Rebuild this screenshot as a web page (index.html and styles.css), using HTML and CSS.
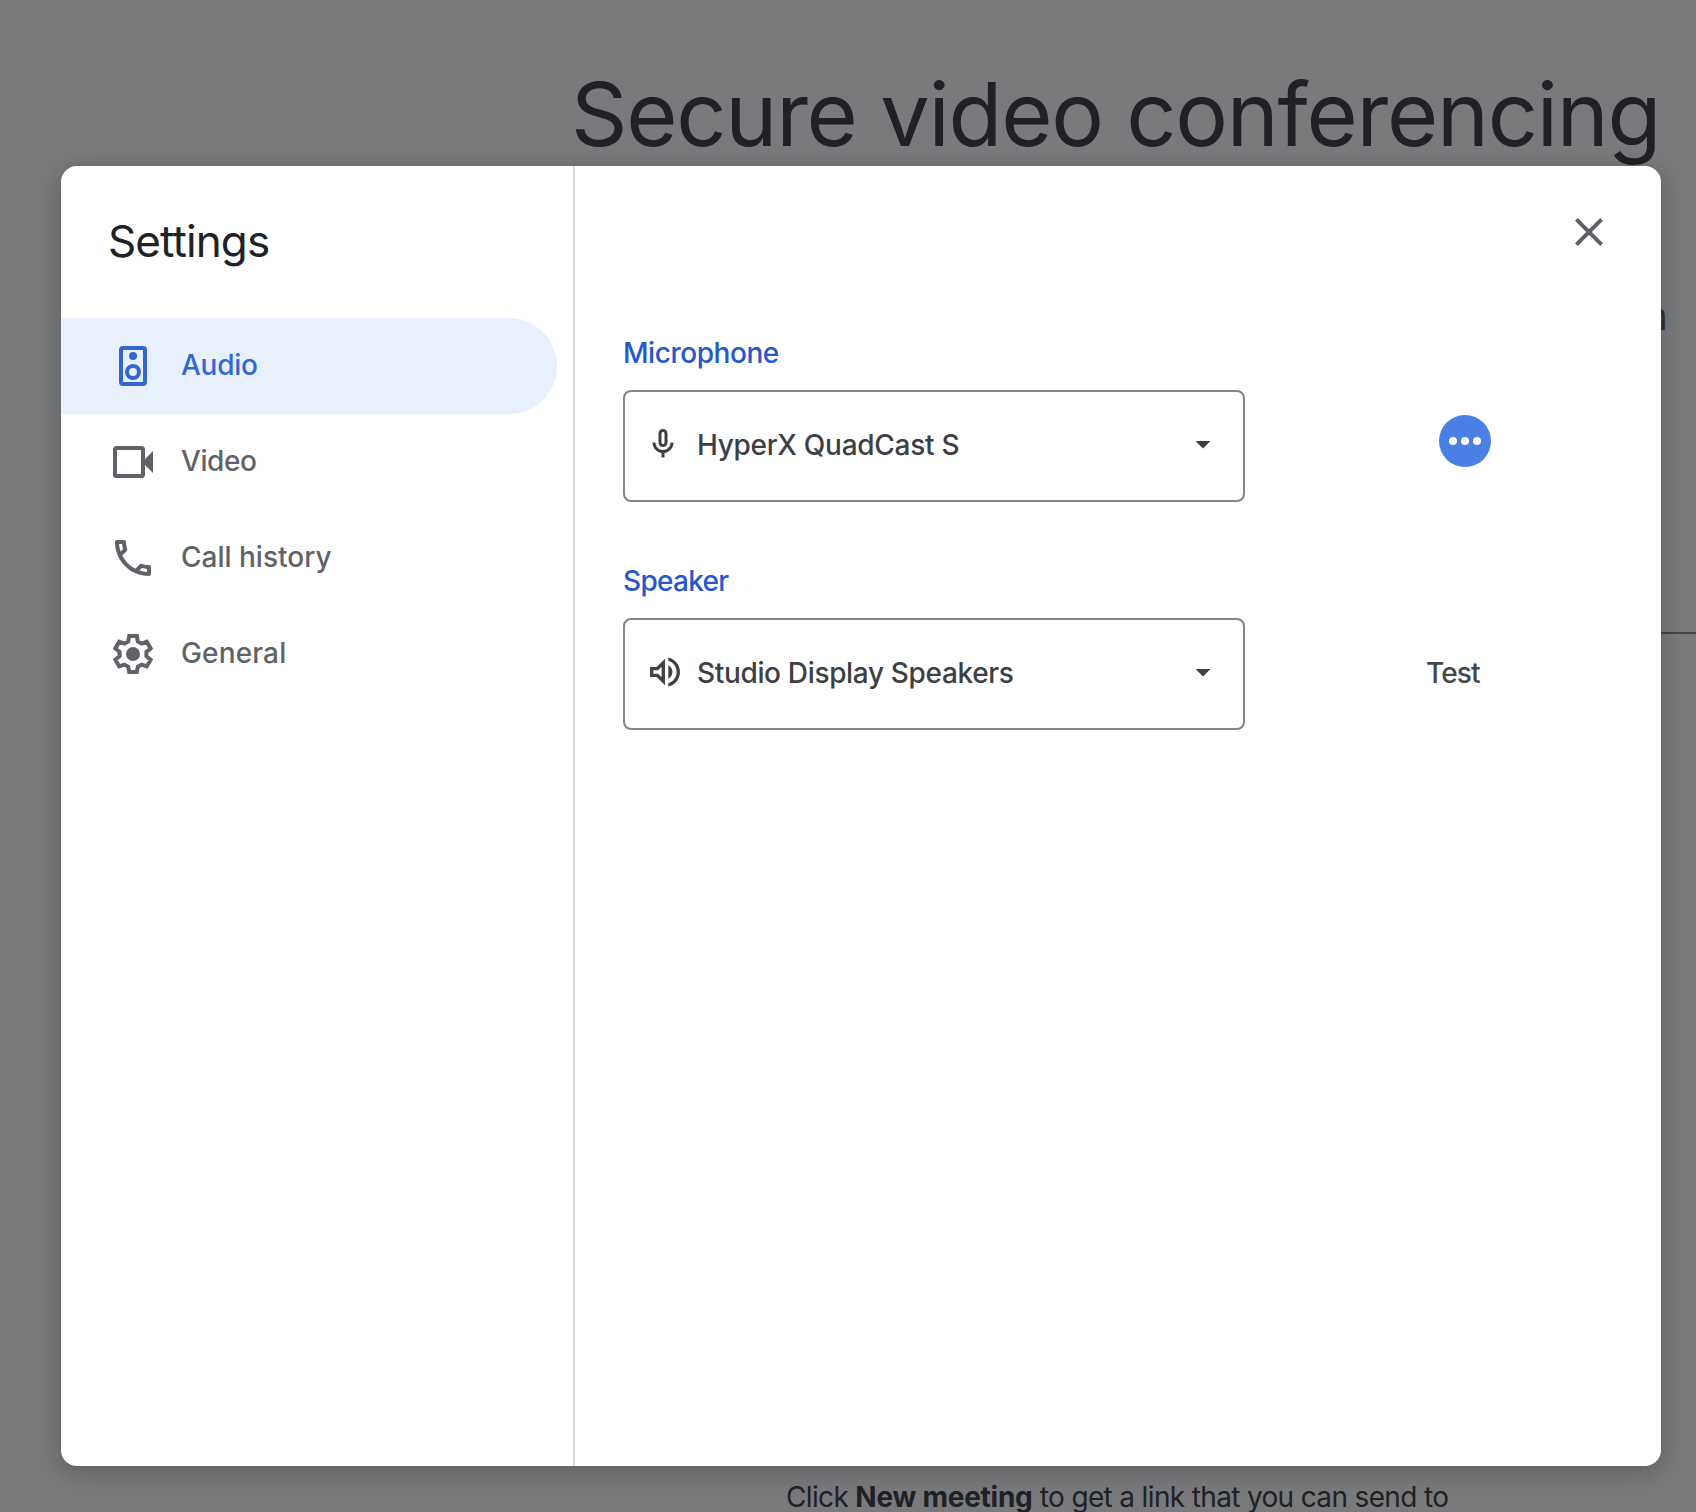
FILE: index.html
```html
<!DOCTYPE html>
<html lang="en">
<head>
<meta charset="utf-8">
<title>Settings</title>
<link rel="stylesheet" href="styles.css">
</head>
<body>
<main class="page">
  <h1 class="headline">Secure video conferencing</h1>
  <p class="lead">n</p>
  <hr class="rule">
  <p class="hint">Click <b>New meeting</b> to get a link that you can send to</p>
</main>

<div class="dialog" role="dialog" aria-labelledby="title">
  <aside class="sidebar">
    <h2 class="title" id="title">Settings</h2>
    <nav class="nav">
      <a class="item active"><svg class="icon" viewBox="0 0 24 24"><path fill-rule="evenodd" d="M7 2h10a2 2 0 0 1 2 2v16a2 2 0 0 1-2 2H7a2 2 0 0 1-2-2V4a2 2 0 0 1 2-2zm0 2v16h10V4z"/><circle cx="12" cy="7" r="2"/><path fill-rule="evenodd" d="M12 11a4 4 0 1 0 0 8 4 4 0 0 0 0-8zm0 2a2 2 0 1 1 0 4 2 2 0 0 1 0-4z"/></svg><span class="t-audio">Audio</span></a>
      <a class="item"><svg class="icon" viewBox="0 0 24 24"><path fill-rule="evenodd" d="M3.800 4h12.400A1.800 1.800 0 0 1 18 5.800v4.700l4-4v11l-4-4v4.700a1.800 1.800 0 0 1-1.800 1.800H3.800A1.800 1.800 0 0 1 2 18.200V5.800A1.800 1.800 0 0 1 3.800 4zM4 6v12h12V6z"/></svg><span class="t-video">Video</span></a>
      <a class="item"><svg class="icon" viewBox="0 0 24 24"><path d="M6.540 5c.06.89.21 1.760.45 2.590l-1.200 1.200c-.41-1.200-.67-2.470-.76-3.790h1.510m9.860 12.020c.85.24 1.720.39 2.600.45v1.490c-1.320-.09-2.590-.35-3.800-.75l1.200-1.190M7.500 3H4c-.55 0-1 .45-1 1 0 9.390 7.610 17 17 17 .55 0 1-.45 1-1v-3.490c0-.55-.45-1-1-1-1.240 0-2.450-.2-3.570-.57-.1-.04-.21-.05-.31-.05-.26 0-.51.1-.71.29l-2.200 2.200c-2.830-1.450-5.150-3.760-6.590-6.590l2.200-2.200c.28-.28.36-.67.25-1.020C8.700 6.450 8.500 5.250 8.500 4c0-.55-.45-1-1-1z"/></svg><span>Call history</span></a>
      <a class="item"><svg class="icon" viewBox="0 0 24 24"><path class="cog" d="M10.100 3h3.800l.5 2.700 1.900 1.100 2.600-.9 1.900 3.300-2.100 1.800v2.100l2.100 1.800-1.900 3.300-2.600-.9-1.900 1.100-.5 2.600h-3.800l-.5-2.600-1.900-1.100-2.600.9-1.900-3.300 2.100-1.800V11L3.200 9.200l1.900-3.300 2.600.9 1.900-1.100z"/><circle cx="12" cy="12" r="3.500"/></svg><span class="t-general">General</span></a>
    </nav>
  </aside>

  <section class="content">
    <header class="bar">
      <svg class="icon close" viewBox="0 0 24 24"><path d="M19 6.410 17.590 5 12 10.590 6.410 5 5 6.410 10.590 12 5 17.590 6.410 19 12 13.410 17.590 19 19 17.590 13.410 12z"/></svg>
    </header>
    <div class="field">
      <div class="label t-mic">Microphone</div>
      <div class="row">
        <div class="select">
          <span class="slot"><svg class="mic" viewBox="0 0 24 24"><path d="M12 14c1.660 0 3-1.340 3-3V5c0-1.660-1.340-3-3-3S9 3.340 9 5v6c0 1.660 1.340 3 3 3zm-1-9c0-.55.45-1 1-1s1 .45 1 1v6c0 .55-.45 1-1 1s-1-.45-1-1V5zm6 6c0 2.760-2.240 5-5 5s-5-2.240-5-5H5c0 3.530 2.610 6.430 6 6.920V21h2v-3.080c3.390-.49 6-3.390 6-6.920h-2z"/></svg></span>
          <span class="value t-hyper">HyperX QuadCast S</span>
          <svg class="arrow" viewBox="0 0 24 24"><path d="m7 10 5 5 5-5z"/></svg>
        </div>
        <div class="level"><i></i><i></i><i></i></div>
      </div>
    </div>
    <div class="field">
      <div class="label t-spk">Speaker</div>
      <div class="row">
        <div class="select">
          <span class="slot"><svg class="vol" viewBox="0 0 24 24"><path d="M3 9v6h4l5 5V4L7 9H3zm7-.17v6.340L7.830 13H5v-2h2.830L10 8.830zM16.500 12c0-1.770-1.020-3.290-2.500-4.030v8.050c1.480-.73 2.500-2.250 2.500-4.020zM14 3.230v2.060c2.890.86 5 3.540 5 6.710s-2.110 5.850-5 6.710v2.060c4.010-.91 7-4.490 7-8.770s-2.990-7.860-7-8.770z"/></svg></span>
          <span class="value t-studio">Studio Display Speakers</span>
          <svg class="arrow" viewBox="0 0 24 24"><path d="m7 10 5 5 5-5z"/></svg>
        </div>
        <div class="test">Test</div>
      </div>
    </div>
  </section>
</div>
</body>
</html>
```
FILE: styles.css
```css
* { box-sizing: border-box; }
body {
  margin: 0;
  height: 1512px;
  overflow: hidden;
  position: relative;
  background: #797a7c;
  color: #202124;
  font-family: Inter, "Open Sans", sans-serif;
}
svg { display: block; flex: none; fill: currentColor; }

.page { height: 1512px; padding: 62px 0 0 571px; overflow: hidden; }
.headline { margin: 0; font-size: 88px; line-height: 104px; font-weight: 400; letter-spacing: -1.23px; white-space: nowrap; }
.lead { margin: 120px 28px 0 0; font-size: 40px; line-height: 60px; color: #303335; text-align: right; }
.rule { margin: 286px 0 0; border: 0; height: 2px; background: #434446; }
.hint { margin: 843px 0 0 215px; font-size: 28px; line-height: 40px; white-space: nowrap; letter-spacing: -0.65px; }
.hint b { letter-spacing: -0.25px; }

.dialog {
  position: absolute;
  left: 61px;
  top: 166px;
  width: 1600px;
  height: 1300px;
  display: flex;
  overflow: hidden;
  background: #fff;
  border-radius: 16px;
  box-shadow: 0 6px 24px rgba(0, 0, 0, .24);
}
.sidebar { width: 514px; border-right: 2px solid #dadce0; padding-top: 47px; }
.title { margin: 0 0 49px 47px; font-size: 44px; line-height: 56px; font-weight: 400; letter-spacing: -0.9px; }
.item {
  display: flex;
  align-items: center;
  gap: 24px;
  width: 496px;
  height: 96px;
  padding-left: 48px;
  color: #5f6368;
  font-size: 28px;
  line-height: 38px;
  font-weight: 500;
}
.item span { padding-bottom: 2px; }
.active { background: #e8f0fe; color: #3367d0; border-radius: 0 48px 48px 0; }
.icon { width: 48px; height: 48px; }
.cog { fill: none; stroke: currentColor; stroke-width: 2; }

.content { flex: 1; padding-left: 48px; }
.bar { height: 167px; display: flex; justify-content: flex-end; padding: 42px 48px 0 0; color: #5f6368; }
.field { margin-bottom: 59px; }
.label { margin-bottom: 17px; color: #2458cc; font-size: 28px; line-height: 40px; font-weight: 500; }
.row { display: flex; align-items: center; }
.select {
  display: flex;
  align-items: center;
  width: 622px;
  height: 112px;
  padding: 0 22px 4px 20px;
  border: 2px solid #80868b;
  border-radius: 8px;
  color: #3c4043;
}
.slot { width: 52px; }
.value { flex: 1; padding-top: 2px; font-size: 28px; line-height: 38px; font-weight: 500; white-space: nowrap; }
.mic, .arrow { width: 36px; height: 36px; }
.vol { width: 40px; height: 40px; }
.level {
  display: flex;
  align-items: center;
  justify-content: center;
  gap: 4px;
  width: 52px;
  height: 52px;
  margin: 0 0 10px 194px;
  border-radius: 50%;
  background: #4a80e4;
}
.level i { width: 8px; height: 8px; border-radius: 50%; background: #fff; }
.test { margin: 0 0 2px 181px; color: #444746; font-size: 28px; line-height: 38px; font-weight: 500; letter-spacing: -0.9px; }

/* Per-label tracking */
.t-audio { letter-spacing: -0.25px; }
.t-video { letter-spacing: -0.4px; }
.t-general { letter-spacing: 0.15px; }
.t-mic { letter-spacing: -0.45px; }
.t-spk { letter-spacing: -0.7px; }
.t-hyper { letter-spacing: -0.28px; }
.t-studio { letter-spacing: -0.34px; }
```
